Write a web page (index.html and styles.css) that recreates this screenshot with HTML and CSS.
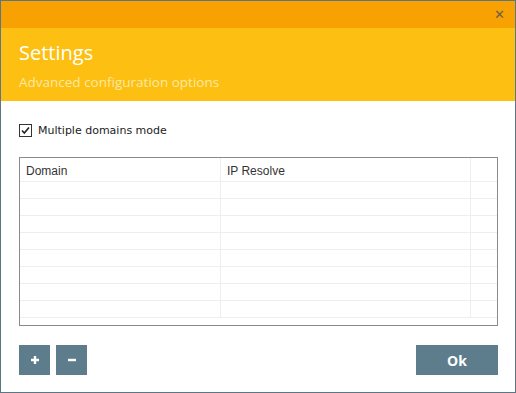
FILE: index.html
```html
<!DOCTYPE html>
<html lang="en">
<head>
    <meta charset="UTF-8">
    <title>Settings</title>
    <link rel="stylesheet" href="styles.css">
</head>
<body>
    <div class="window">
        <div class="title-bar">
            <span class="close-btn">&#x2715;</span>
        </div>

        <div class="header">
            <h1 class="header-title">Settings</h1>
            <p class="header-sub">Advanced configuration options</p>
        </div>

        <div class="content">
            <label class="check-row">
                <span class="checkbox">
                    <svg width="11" height="11" viewBox="0 0 11 11">
                        <path d="M2 5.5 L4.3 8 L9 2.5" fill="none" stroke="#222" stroke-width="1.6"/>
                    </svg>
                </span>
                Multiple domains mode
            </label>

            <div class="grid">
                <div class="grid-row grid-head">
                    <div class="cell">Domain</div>
                    <div class="cell">IP Resolve</div>
                    <div class="cell"></div>
                </div>
                <div class="grid-row"><div class="cell"></div><div class="cell"></div><div class="cell"></div></div>
                <div class="grid-row"><div class="cell"></div><div class="cell"></div><div class="cell"></div></div>
                <div class="grid-row"><div class="cell"></div><div class="cell"></div><div class="cell"></div></div>
                <div class="grid-row"><div class="cell"></div><div class="cell"></div><div class="cell"></div></div>
                <div class="grid-row"><div class="cell"></div><div class="cell"></div><div class="cell"></div></div>
                <div class="grid-row"><div class="cell"></div><div class="cell"></div><div class="cell"></div></div>
                <div class="grid-row"><div class="cell"></div><div class="cell"></div><div class="cell"></div></div>
                <div class="grid-row"><div class="cell"></div><div class="cell"></div><div class="cell"></div></div>
            </div>

            <div class="actions">
                <button class="btn btn-square">
                    <svg width="10" height="10" viewBox="0 0 10 10"><path d="M5 1v8M1 5h8" stroke="#fff" stroke-width="2.4"/></svg>
                </button>
                <button class="btn btn-square">
                    <svg width="10" height="10" viewBox="0 0 10 10"><path d="M1 5h8" stroke="#fff" stroke-width="2.4"/></svg>
                </button>
                <button class="btn btn-ok">Ok</button>
            </div>
        </div>
    </div>
</body>
</html>
```

FILE: styles.css
```css
* {
    margin: 0;
    padding: 0;
    box-sizing: border-box;
}

body {
    font-family: 'Open Sans', 'Noto Sans', sans-serif;
    background: #fff;
    width: 516px;
    height: 393px;
    overflow: hidden;
}

.window {
    width: 516px;
    height: 393px;
    border: 1px solid #5b7786;
    display: flex;
    flex-direction: column;
    background: #fff;
}

.title-bar {
    height: 27px;
    background: #f8a102;
    display: flex;
    justify-content: flex-end;
    align-items: center;
    padding-right: 10px;
}

.close-btn {
    color: #6b6048;
    font-family: 'DejaVu Sans', sans-serif;
    font-size: 13px;
    line-height: 1;
}

.header {
    height: 73px;
    background: #fcbf12;
    padding: 11px 18px 0;
}

.header-title {
    color: #fff;
    font-size: 20px;
    font-weight: normal;
    line-height: 28px;
}

.header-sub {
    color: #fde9a2;
    font-size: 13.5px;
    line-height: 18px;
    margin-top: 6px;
}

.content {
    flex: 1;
    padding: 21px 17px 0 18px;
    display: flex;
    flex-direction: column;
}

.check-row {
    display: flex;
    align-items: center;
    gap: 6px;
    font-family: 'DejaVu Sans', sans-serif;
    font-size: 11px;
    color: #222;
    height: 14px;
    margin-top: 1px;
}

.checkbox {
    width: 13px;
    height: 13px;
    border: 1px solid #333;
    display: flex;
    align-items: center;
    justify-content: center;
    background: #fff;
}

.grid {
    margin-top: 20px;
    width: 479px;
    height: 169px;
    border: 1px solid #8a8a8a;
    overflow: hidden;
}

.grid-row {
    display: grid;
    grid-template-columns: 201px 250px 26px;
    height: 17px;
    border-bottom: 1px solid #eeeeee;
}

.grid-head {
    height: 24px;
}

.cell {
    border-right: 1px solid #eeeeee;
    font-family: 'Liberation Sans', Arial, sans-serif;
    font-size: 12px;
    color: #333;
    padding: 6px 0 0 6px;
    line-height: 14px;
}

.cell:last-child {
    border-right: none;
}

.actions {
    margin-top: 19px;
    display: flex;
    gap: 6px;
}

.btn {
    height: 30px;
    background: #5e7d8c;
    border: none;
    color: #fff;
    display: flex;
    align-items: center;
    justify-content: center;
}

.btn-square {
    width: 31px;
}

.btn-ok {
    width: 82px;
    margin-left: auto;
    font-family: 'Open Sans', sans-serif;
    font-size: 14px;
    font-weight: bold;
}
```
